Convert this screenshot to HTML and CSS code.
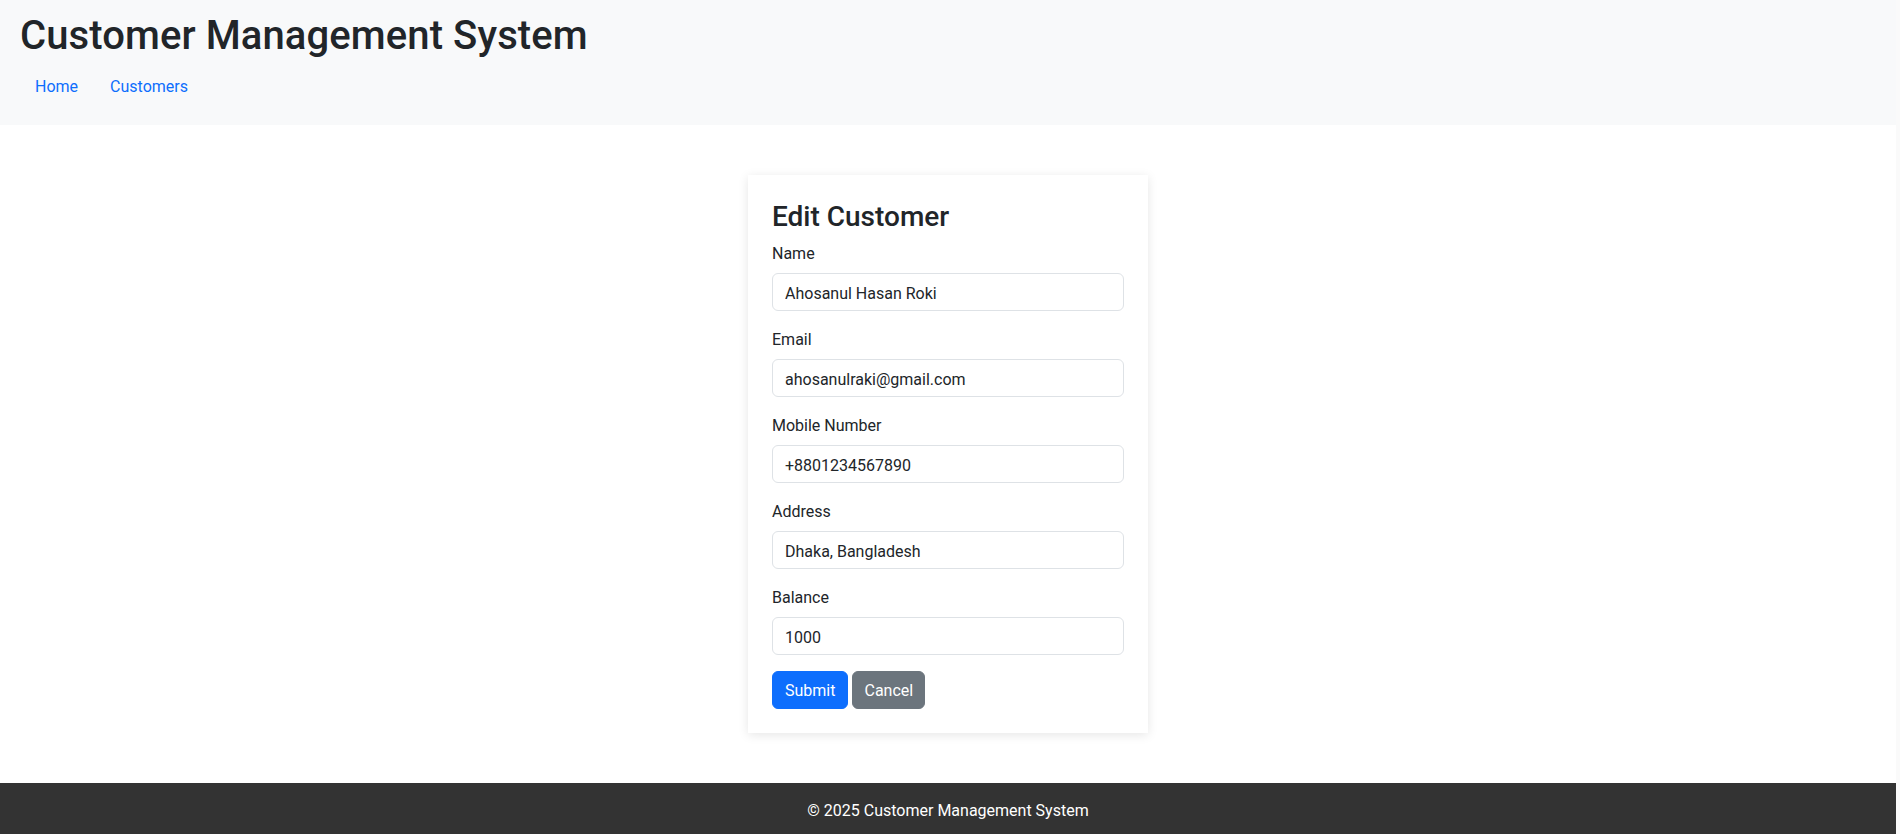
FILE: index.html
```html
<!DOCTYPE html>
<html lang="en">
<head>
<meta charset="utf-8">
<title>Edit Customer</title>
<link rel="stylesheet" href="styles.css">
</head>
<body>
<header class="site-header">
  <h1 class="site-title">Customer Management System</h1>
  <nav>
    <ul class="nav">
      <li><a class="nav-link" href="#">Home</a></li>
      <li><a class="nav-link" href="#">Customers</a></li>
    </ul>
  </nav>
</header>
<main class="main">
  <section class="card">
    <h3 class="card-title">Edit Customer</h3>
    <form class="form">
      <div class="field">
        <label class="label" for="name">Name</label>
        <input class="input" id="name" type="text" value="Ahosanul Hasan Roki">
      </div>
      <div class="field">
        <label class="label" for="email">Email</label>
        <input class="input" id="email" type="email" value="ahosanulraki@gmail.com">
      </div>
      <div class="field">
        <label class="label" for="mobile">Mobile Number</label>
        <input class="input" id="mobile" type="text" value="+8801234567890">
      </div>
      <div class="field">
        <label class="label" for="address">Address</label>
        <input class="input" id="address" type="text" value="Dhaka, Bangladesh">
      </div>
      <div class="field">
        <label class="label" for="balance">Balance</label>
        <input class="input" id="balance" type="text" value="1000">
      </div>
      <div class="actions">
        <button type="submit" class="btn btn-primary">Submit</button>
        <a href="#" class="btn btn-secondary">Cancel</a>
      </div>
    </form>
  </section>
</main>
<footer class="site-footer">
  <p class="footer-text">© 2025 Customer Management System</p>
</footer>
</body>
</html>
```
FILE: styles.css
```css
html {
  background: #fafafa;
}
body {
  margin: 0 4px 0 0;
  background: #fff;
  font-family: Roboto, "Liberation Sans", sans-serif;
  font-size: 16px;
  line-height: 1.5;
  color: #212529;
}
.site-header {
  background: #f8f9fa;
  padding: 12px 18px 19px 20px;
}
.site-title {
  margin: 0 0 6px;
  font-size: 40px;
  line-height: 48px;
  font-weight: 500;
  letter-spacing: 0.1px;
  color: #212529;
}
.nav {
  display: flex;
  list-style: none;
  margin: 0 0 0 -1px;
  padding: 0;
}
.nav-link {
  display: block;
  padding: 9px 16px 7px;
  color: #0d6efd;
  text-decoration: none;
}
.main {
  display: flex;
  justify-content: center;
  padding: 50px 0;
}
.card {
  width: 400px;
  box-sizing: border-box;
  padding: 24px;
  background: #fff;
  box-shadow: 0 2px 10px rgba(0, 0, 0, 0.1);
}
.card-title {
  margin: 0 0 6px;
  font-size: 28px;
  line-height: 36px;
  font-weight: 500;
}
.form {
  margin: 0;
}
.field {
  display: flex;
  flex-direction: column;
  margin-bottom: 16px;
}
.label {
  padding-top: 1px;
  margin-bottom: 7px;
  line-height: 24px;
}
.input {
  box-sizing: border-box;
  width: 100%;
  height: 38px;
  padding: 7px 12px 5px;
  border: 1px solid #dee2e6;
  border-radius: 6px;
  font: inherit;
  line-height: 24px;
  color: #212529;
  background: #fff;
}
.actions {
  display: flex;
  gap: 4px;
}
.btn {
  display: inline-block;
  box-sizing: border-box;
  height: 38px;
  padding: 7px 12px 5px;
  border: 1px solid transparent;
  border-radius: 6px;
  font: inherit;
  line-height: 24px;
  color: #fff;
  text-decoration: none;
  cursor: pointer;
}
.btn-primary {
  background: #0d6efd;
  border-color: #0d6efd;
}
.btn-secondary {
  padding-left: 11px;
  padding-right: 11px;
  background: #6c757d;
  border-color: #6c757d;
}
.site-footer {
  background: #333;
  color: #fff;
  padding: 16px;
  text-align: center;
}
.footer-text {
  margin: 0;
  line-height: 24px;
}
```
